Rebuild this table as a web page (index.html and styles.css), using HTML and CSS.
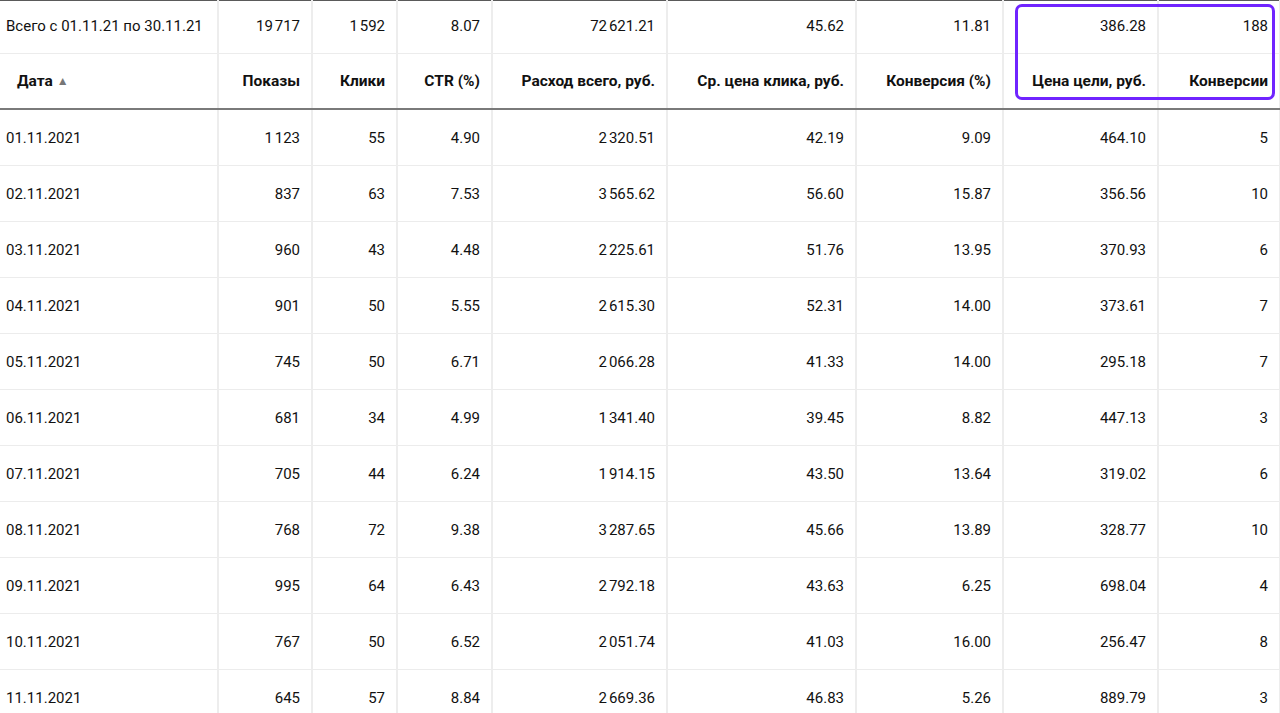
FILE: index.html
```html
<!DOCTYPE html>
<html lang="ru">
<head>
<meta charset="utf-8">
<title>Статистика</title>
<link rel="stylesheet" href="styles.css">
</head>
<body>
<div class="wrap">
<table class="stats">
  <colgroup>
    <col class="c-date"><col class="c-shows"><col class="c-clicks"><col class="c-ctr"><col class="c-spend"><col class="c-cpc"><col class="c-conv"><col class="c-goal"><col class="c-convs">
  </colgroup>
  <thead>
    <tr class="total">
      <td class="left">Всего с 01.11.21 по 30.11.21</td>
      <td>19&#8239;717</td><td>1&#8239;592</td><td>8.07</td><td>72&#8239;621.21</td><td>45.62</td><td>11.81</td><td>386.28</td><td>188</td>
    </tr>
    <tr class="head">
      <th class="left sort">Дата <span class="tri">▲</span></th>
      <th>Показы</th><th>Клики</th><th>CTR (%)</th><th>Расход всего, руб.</th><th>Ср. цена клика, руб.</th><th>Конверсия (%)</th><th>Цена цели, руб.</th><th>Конверсии</th>
    </tr>
  </thead>
  <tbody>
    <tr><td class="left">01.11.2021</td><td>1&#8239;123</td><td>55</td><td>4.90</td><td>2&#8239;320.51</td><td>42.19</td><td>9.09</td><td>464.10</td><td>5</td></tr>
    <tr><td class="left">02.11.2021</td><td>837</td><td>63</td><td>7.53</td><td>3&#8239;565.62</td><td>56.60</td><td>15.87</td><td>356.56</td><td>10</td></tr>
    <tr><td class="left">03.11.2021</td><td>960</td><td>43</td><td>4.48</td><td>2&#8239;225.61</td><td>51.76</td><td>13.95</td><td>370.93</td><td>6</td></tr>
    <tr><td class="left">04.11.2021</td><td>901</td><td>50</td><td>5.55</td><td>2&#8239;615.30</td><td>52.31</td><td>14.00</td><td>373.61</td><td>7</td></tr>
    <tr><td class="left">05.11.2021</td><td>745</td><td>50</td><td>6.71</td><td>2&#8239;066.28</td><td>41.33</td><td>14.00</td><td>295.18</td><td>7</td></tr>
    <tr><td class="left">06.11.2021</td><td>681</td><td>34</td><td>4.99</td><td>1&#8239;341.40</td><td>39.45</td><td>8.82</td><td>447.13</td><td>3</td></tr>
    <tr><td class="left">07.11.2021</td><td>705</td><td>44</td><td>6.24</td><td>1&#8239;914.15</td><td>43.50</td><td>13.64</td><td>319.02</td><td>6</td></tr>
    <tr><td class="left">08.11.2021</td><td>768</td><td>72</td><td>9.38</td><td>3&#8239;287.65</td><td>45.66</td><td>13.89</td><td>328.77</td><td>10</td></tr>
    <tr><td class="left">09.11.2021</td><td>995</td><td>64</td><td>6.43</td><td>2&#8239;792.18</td><td>43.63</td><td>6.25</td><td>698.04</td><td>4</td></tr>
    <tr><td class="left">10.11.2021</td><td>767</td><td>50</td><td>6.52</td><td>2&#8239;051.74</td><td>41.03</td><td>16.00</td><td>256.47</td><td>8</td></tr>
    <tr><td class="left">11.11.2021</td><td>645</td><td>57</td><td>8.84</td><td>2&#8239;669.36</td><td>46.83</td><td>5.26</td><td>889.79</td><td>3</td></tr>
  </tbody>
</table>
<div class="highlight"></div>
</div>
</body>
</html>
```

FILE: styles.css
```css
html, body {
  margin: 0;
  padding: 0;
  background: #fff;
}
body {
  font-family: Roboto, "Liberation Sans", sans-serif;
  font-size: 15px;
  color: #111;
  overflow: hidden;
}
.wrap {
  position: relative;
  width: 1280px;
}
.stats {
  width: 1280px;
  table-layout: fixed;
  border-collapse: collapse;
  border-top: 1px solid #5a5a5a;
}
.c-date { width: 218px; }
.c-shows { width: 94px; }
.c-clicks { width: 85px; }
.c-ctr { width: 95px; }
.c-spend { width: 175px; }
.c-cpc { width: 189px; }
.c-conv { width: 147px; }
.c-goal { width: 155px; }
.c-convs { width: 122px; }

.stats td, .stats th {
  text-align: right;
  padding: 0 11px 0 6px;
  border-right: 2px solid #ededed;
  border-bottom: 1px solid #ececec;
  white-space: nowrap;
  vertical-align: middle;
}
.stats .left {
  text-align: left;
}
.total td {
  height: 49px;
  padding-bottom: 3px;
}
.head th {
  height: 54px;
  font-size: 15.5px;
  font-weight: 700;
  border-bottom: 2px solid #7a7a7a;
}
.head th.sort {
  padding-left: 17px;
}
.tri {
  font-size: 12px;
  color: #777;
  vertical-align: 1px;
}
tbody td {
  height: 55px;
}
.highlight {
  position: absolute;
  left: 1015px;
  top: 4px;
  width: 254px;
  height: 90px;
  border: 3px solid #7024ff;
  border-radius: 7px;
}
```
